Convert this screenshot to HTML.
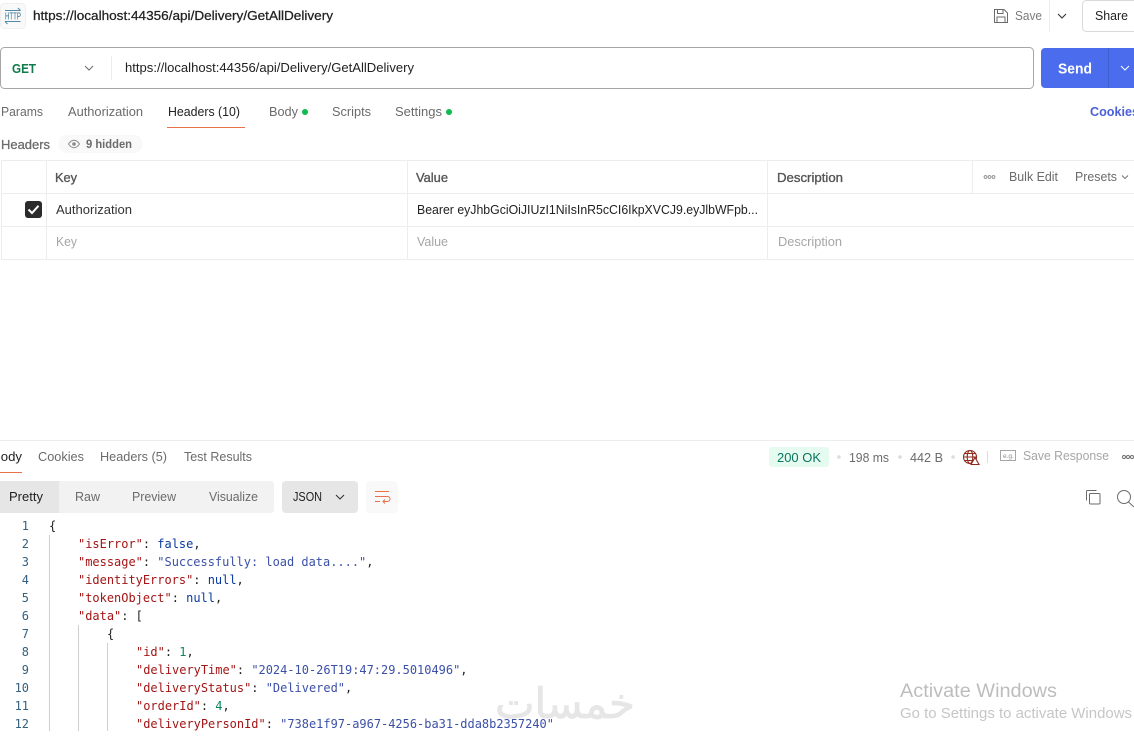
<!DOCTYPE html>
<html lang="en">
<head>
<meta charset="utf-8">
<title>Postman request</title>
<style>
html,body{margin:0;padding:0;background:#fff;width:1134px;height:737px;overflow:hidden}
svg{display:block}
text{font-family:"Liberation Sans",sans-serif;font-size:13.2px;fill:#6b6b6b}
.d{fill:#212121}
.p{fill:#a6a6a6}
.b{font-weight:bold}
.c text,text.c{font-family:"DejaVu Sans Mono",monospace;font-size:11.97px;fill:#212121;white-space:pre;stroke:currentColor;stroke-width:0}
.n{fill:#35607f!important;text-anchor:end}
.k{fill:#a31515}
.s{fill:#3b50a8}
.l{fill:#0a3a9e}
.u{fill:#098658}
.ln{stroke:#ededed;stroke-width:1;fill:none}
.g{stroke:#cfcfcf;stroke-width:1}
.i{fill:none;stroke:#6b6b6b;stroke-width:1}
.h{fill:#555;stroke:#555;stroke-width:.35}
</style>
</head>
<body>
<svg width="1134" height="737" viewBox="0 0 1134 737" xmlns="http://www.w3.org/2000/svg">
<rect width="1134" height="737" fill="#fff"/>

<!-- top bar -->
<rect x="0.5" y="3.5" width="25" height="25" rx="4" fill="#f9f9f9" stroke="#efefef"/>
<path d="M5 10.500H20.500M18 8L20.500 10.500M5 21.500H20.500M5 21.500L7.500 24" fill="none" stroke="#4f8aa8" stroke-width="1"/>
<text x="5" y="19.500" style="font-size:10.500px;fill:#2f6f91" textLength="16" lengthAdjust="spacingAndGlyphs">HTTP</text>
<text x="33" y="20" class="d" style="stroke:#212121;stroke-width:.25" textLength="300" lengthAdjust="spacingAndGlyphs">https://localhost:44356/api/Delivery/GetAllDelivery</text>

<path d="M994.500 9.500H1004L1007.500 13V22.500H994.500ZM997.500 9.500V13.500H1003V9.500M997 22.500V17H1005V22.500" class="i"/>
<text x="1015" y="20" textLength="27" lengthAdjust="spacingAndGlyphs" style="fill:#7a7a7a">Save</text>
<path d="M1049.500 0V32" class="ln"/>
<path d="M1058 14L1062 18L1066 14" fill="none" stroke="#333" stroke-width="1.100"/>
<rect x="1082.500" y="0.500" width="70" height="31" rx="4" fill="#fff" stroke="#d9d9d9"/>
<text x="1095" y="20" class="d" textLength="33" lengthAdjust="spacingAndGlyphs">Share</text>

<!-- URL bar -->
<rect x="0.500" y="47.500" width="1033" height="41" rx="4" fill="#fff" stroke="#a6a6a6"/>
<text x="12" y="73" class="b" style="fill:#0f7a4a" textLength="24" lengthAdjust="spacingAndGlyphs">GET</text>
<path d="M85 66L89 70L93 66" fill="none" stroke="#6b6b6b" stroke-width="1"/>
<path d="M111.500 56V80" class="ln"/>
<text x="125" y="72" class="d" textLength="289" lengthAdjust="spacingAndGlyphs">https://localhost:44356/api/Delivery/GetAllDelivery</text>
<rect x="1041" y="48" width="110" height="40" rx="4" fill="#4a6ced"/>
<path d="M1108.500 48V88" stroke="#3f5ed0" stroke-width="1"/>
<text x="1058" y="73.500" class="b" style="font-size:15px;fill:#fff" textLength="34" lengthAdjust="spacingAndGlyphs">Send</text>
<path d="M1121 66L1125 70L1129 66" fill="none" stroke="#fff" stroke-width="1"/>

<!-- request tabs -->
<text x="1" y="116" textLength="42" lengthAdjust="spacingAndGlyphs">Params</text>
<text x="68" y="116" textLength="75" lengthAdjust="spacingAndGlyphs">Authorization</text>
<text x="168" y="116" class="d" textLength="72" lengthAdjust="spacingAndGlyphs">Headers (10)</text>
<rect x="167" y="127" width="78" height="1" fill="#e8704a"/>
<text x="269" y="116" textLength="29" lengthAdjust="spacingAndGlyphs">Body</text>
<circle cx="305" cy="112" r="3" fill="#0cbb52"/>
<text x="332" y="116" textLength="39" lengthAdjust="spacingAndGlyphs">Scripts</text>
<text x="395" y="116" textLength="47" lengthAdjust="spacingAndGlyphs">Settings</text>
<circle cx="449" cy="112" r="3" fill="#0cbb52"/>
<text x="1090" y="116" class="b" style="fill:#4a5fd8" textLength="49" lengthAdjust="spacingAndGlyphs">Cookies</text>

<!-- headers summary -->
<text x="1" y="149" style="stroke:#6b6b6b;stroke-width:.3" textLength="49" lengthAdjust="spacingAndGlyphs">Headers</text>
<rect x="58" y="135" width="85" height="18" rx="9" fill="#f9f9f9"/>
<path d="M68.500 144C70.500 141 72 140.300 74 140.300S77.500 141 79.500 144C77.500 147 76 147.700 74 147.700S70.500 147 68.500 144Z" fill="none" stroke="#8a8a8a" stroke-width="1"/>
<circle cx="74" cy="144" r="1.800" fill="#8a8a8a"/>
<text x="86" y="148" class="b" style="font-size:12px" textLength="46" lengthAdjust="spacingAndGlyphs">9 hidden</text>

<!-- table -->
<path d="M1 160.500H1134M1 193.500H1134M1 226.500H1134M1 259.500H1134M1.500 160V260M46.500 160V260M407.500 160V260M767.500 160V260M972.500 160V193" class="ln"/>
<text x="55" y="182" class="h" textLength="22" lengthAdjust="spacingAndGlyphs">Key</text>
<text x="416" y="182" class="h" textLength="32" lengthAdjust="spacingAndGlyphs">Value</text>
<text x="777" y="182" class="h" textLength="66" lengthAdjust="spacingAndGlyphs">Description</text>
<g fill="none" stroke="#8a8a8a" stroke-width=".9"><circle cx="985.500" cy="177" r="1.400"/><circle cx="989.500" cy="177" r="1.400"/><circle cx="993.500" cy="177" r="1.400"/></g>
<text x="1009" y="181" textLength="49" lengthAdjust="spacingAndGlyphs">Bulk Edit</text>
<text x="1075" y="181" textLength="42" lengthAdjust="spacingAndGlyphs">Presets</text>
<path d="M1122 175.500L1125 178.500L1128 175.500" fill="none" stroke="#6b6b6b" stroke-width=".9"/>
<rect x="25" y="201" width="17" height="17" rx="3" fill="#2b2b2b"/>
<path d="M28.500 209.500L32 213L38.500 205.800" fill="none" stroke="#fff" stroke-width="2"/>
<text x="56" y="214" class="d" style="fill:#333" textLength="76" lengthAdjust="spacingAndGlyphs">Authorization</text>
<text x="417" y="214" class="d" textLength="341" lengthAdjust="spacingAndGlyphs">Bearer eyJhbGciOiJIUzI1NiIsInR5cCI6IkpXVCJ9.eyJlbWFpb...</text>
<text x="56" y="246" class="p" textLength="21" lengthAdjust="spacingAndGlyphs">Key</text>
<text x="417" y="246" class="p" textLength="31" lengthAdjust="spacingAndGlyphs">Value</text>
<text x="778" y="246" class="p" textLength="64" lengthAdjust="spacingAndGlyphs">Description</text>

<!-- response -->
<path d="M0 440.500H1134" class="ln"/>
<text x="-8" y="461" class="d" textLength="30" lengthAdjust="spacingAndGlyphs">Body</text>
<rect x="0" y="472" width="22" height="1" fill="#e8704a"/>
<text x="38" y="461" textLength="46" lengthAdjust="spacingAndGlyphs">Cookies</text>
<text x="100" y="461" textLength="67" lengthAdjust="spacingAndGlyphs">Headers (5)</text>
<text x="184" y="461" textLength="68" lengthAdjust="spacingAndGlyphs">Test Results</text>

<rect x="769" y="447" width="60" height="20" rx="3" fill="#e5fbf0"/>
<text x="777" y="462" style="fill:#0a7560" textLength="44" lengthAdjust="spacingAndGlyphs">200 OK</text>
<circle cx="839" cy="457" r="1.800" fill="#dcdcdc"/>
<text x="849" y="462" textLength="40" lengthAdjust="spacingAndGlyphs">198 ms</text>
<circle cx="900" cy="457" r="1.800" fill="#dcdcdc"/>
<text x="910" y="462" textLength="33" lengthAdjust="spacingAndGlyphs">442 B</text>
<circle cx="953" cy="457" r="1.800" fill="#dcdcdc"/>
<g fill="none" stroke="#8f2a1c" stroke-width="1.100">
<circle cx="970" cy="457" r="6.500"/><ellipse cx="970" cy="457" rx="2.800" ry="6.500"/><path d="M963.500 457H976.500M964.500 453.500H975.500M964.500 460.500H972"/>
<path d="M975 457.500L979 464.500H971Z" fill="#fff"/>
</g>
<path d="M987.500 451V463" class="ln" style="stroke:#dcdcdc"/>
<rect x="1000.500" y="450.500" width="15" height="10" fill="none" stroke="#a6a6a6"/>
<text x="1003" y="458" style="font-size:6.500px;fill:#8a8a8a">e.g.</text>
<text x="1023" y="460" class="p" textLength="86" lengthAdjust="spacingAndGlyphs">Save Response</text>
<g fill="none" stroke="#6b6b6b" stroke-width=".9"><circle cx="1124" cy="457" r="1.500"/><circle cx="1128" cy="457" r="1.500"/><circle cx="1132" cy="457" r="1.500"/></g>

<!-- response toolbar -->
<rect x="0" y="481" width="274" height="32" rx="3" fill="#f2f2f2"/>
<rect x="0" y="481" width="59" height="32" fill="#e6e6e6"/>
<text x="9" y="501" class="d" textLength="34" lengthAdjust="spacingAndGlyphs">Pretty</text>
<text x="75" y="501" textLength="25" lengthAdjust="spacingAndGlyphs">Raw</text>
<text x="132" y="501" textLength="44" lengthAdjust="spacingAndGlyphs">Preview</text>
<text x="209" y="501" textLength="49" lengthAdjust="spacingAndGlyphs">Visualize</text>
<rect x="282" y="481" width="76" height="32" rx="4" fill="#e6e6e6"/>
<text x="293" y="501" class="d" textLength="29" lengthAdjust="spacingAndGlyphs">JSON</text>
<path d="M336 495L340 499L344 495" fill="none" stroke="#333" stroke-width="1.100"/>
<rect x="366" y="481" width="32" height="32" rx="4" fill="#f9f9f9"/>
<path d="M375 491.500H389M375 496.500H387.500A2.500 2.500 0 0 1 387.500 501.500H383M385 499.500L383 501.500L385 503.500M375 501.500H380" fill="none" stroke="#e8704a" stroke-width="1"/>
<rect x="1089.500" y="493.500" width="10.500" height="10.500" rx="1" fill="#fff" stroke="#6b6b6b"/>
<path d="M1086.500 500.500V491.500A1 1 0 0 1 1087.500 490.500H1096.500" fill="none" stroke="#6b6b6b"/>
<circle cx="1124" cy="497" r="6.500" fill="none" stroke="#6b6b6b"/>
<path d="M1128.500 502L1134 507" stroke="#6b6b6b" fill="none"/>

<!-- code -->
<path d="M49.500 535V731" class="g"/>
<path d="M78.500 625V731" class="g"/>
<path d="M107.500 643V731" class="g"/>
<g class="c" xml:space="preserve">
<text x="29" y="530" class="n">1</text>
<text x="29" y="548" class="n">2</text>
<text x="29" y="566" class="n">3</text>
<text x="29" y="584" class="n">4</text>
<text x="29" y="602" class="n">5</text>
<text x="29" y="620" class="n">6</text>
<text x="29" y="638" class="n">7</text>
<text x="29" y="656" class="n">8</text>
<text x="29" y="674" class="n">9</text>
<text x="29" y="692" class="n">10</text>
<text x="29" y="710" class="n">11</text>
<text x="29" y="728" class="n">12</text>
<text x="49" y="530">{</text>
<text x="78" y="548"><tspan class="k">"isError"</tspan>: <tspan class="l">false</tspan>,</text>
<text x="78" y="566"><tspan class="k">"message"</tspan>: <tspan class="s">"Successfully: load data...."</tspan>,</text>
<text x="78" y="584"><tspan class="k">"identityErrors"</tspan>: <tspan class="l">null</tspan>,</text>
<text x="78" y="602"><tspan class="k">"tokenObject"</tspan>: <tspan class="l">null</tspan>,</text>
<text x="78" y="620"><tspan class="k">"data"</tspan>: [</text>
<text x="107" y="638">{</text>
<text x="136" y="656"><tspan class="k">"id"</tspan>: <tspan class="u">1</tspan>,</text>
<text x="136" y="674"><tspan class="k">"deliveryTime"</tspan>: <tspan class="s">"2024-10-26T19:47:29.5010496"</tspan>,</text>
<text x="136" y="692"><tspan class="k">"deliveryStatus"</tspan>: <tspan class="s">"Delivered"</tspan>,</text>
<text x="136" y="710"><tspan class="k">"orderId"</tspan>: <tspan class="u">4</tspan>,</text>
<text x="136" y="728"><tspan class="k">"deliveryPersonId"</tspan>: <tspan class="s">"738e1f97-a967-4256-ba31-dda8b2357240"</tspan></text>
</g>

<!-- watermark -->
<text x="635" y="718" text-anchor="start" direction="rtl" style="font-family:'DejaVu Sans',sans-serif;font-size:42px;fill:#e6e6e6;stroke:#e6e6e6;stroke-width:.8">خمسات</text>

<!-- activate windows -->
<text x="900" y="697" style="font-size:19px;fill:#bdbdbd" textLength="157" lengthAdjust="spacingAndGlyphs">Activate Windows</text>
<text x="900" y="718" style="font-size:14.500px;fill:#c6c6c6" textLength="232" lengthAdjust="spacingAndGlyphs">Go to Settings to activate Windows</text>
</svg>
</body>
</html>
